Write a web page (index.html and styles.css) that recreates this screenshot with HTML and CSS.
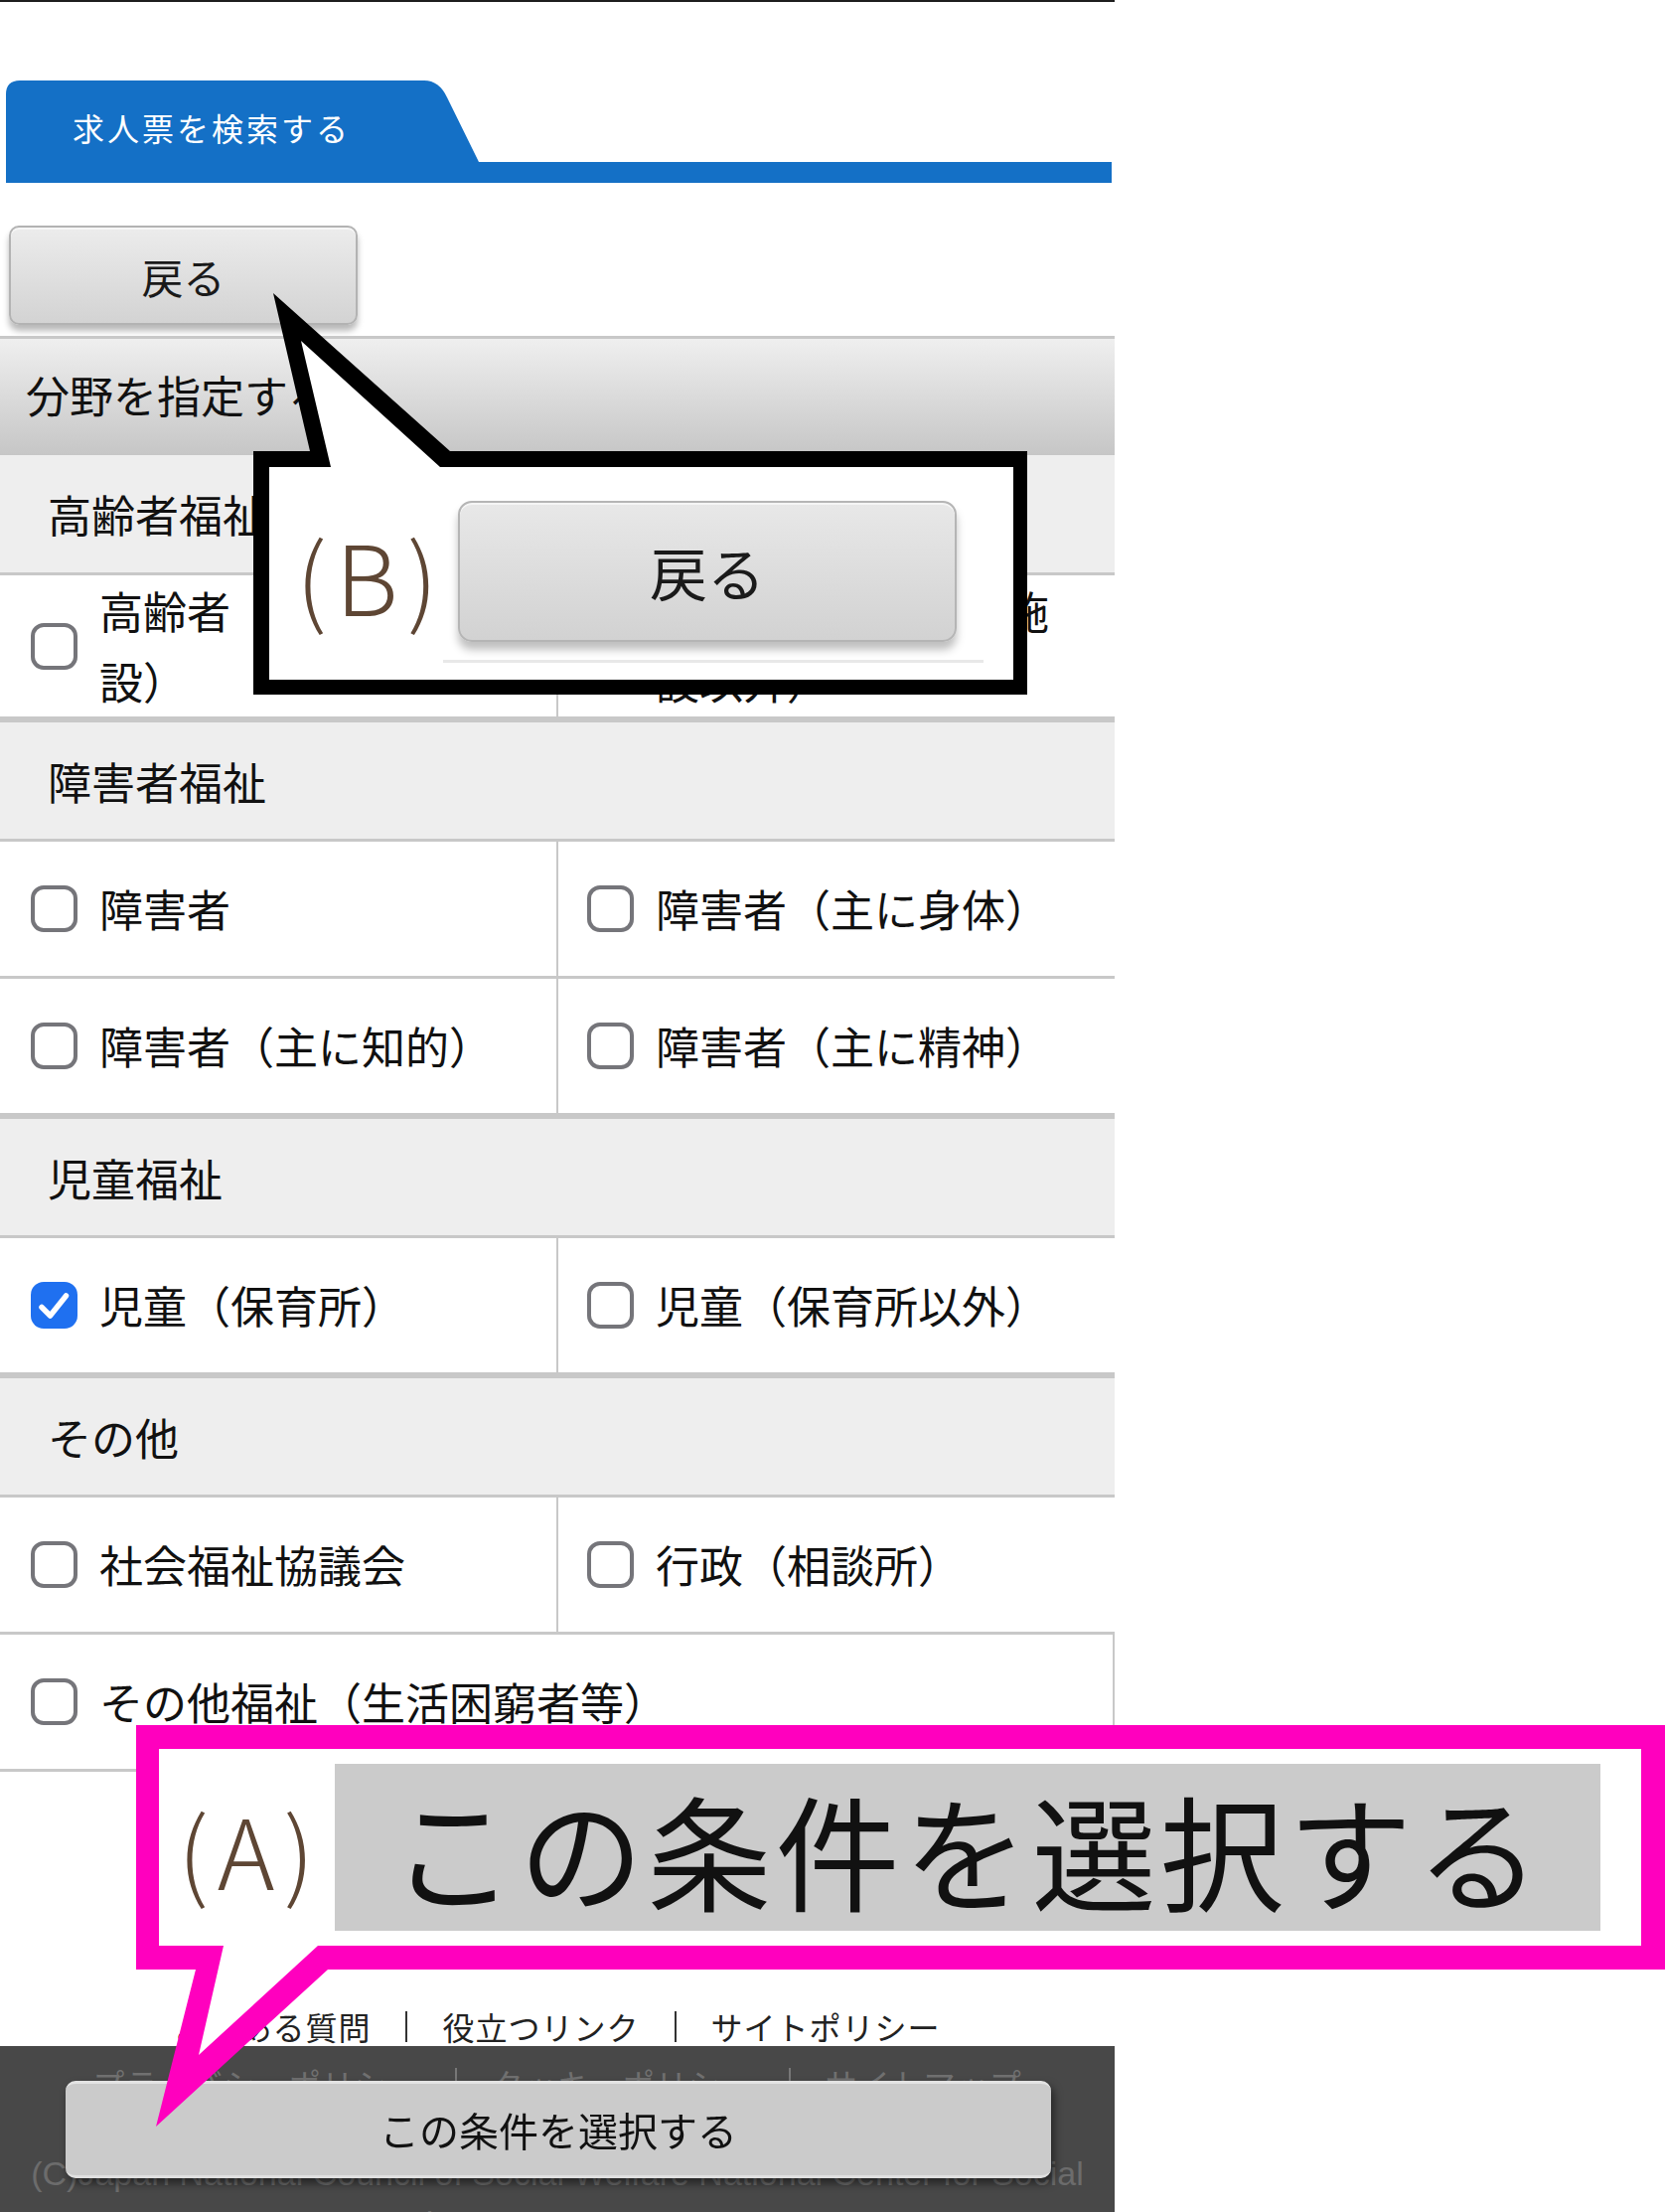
FILE: index.html
```html
<!DOCTYPE html>
<html lang="ja">
<head>
    <meta charset="UTF-8">
    <meta name="viewport" content="width=device-width, initial-scale=1.0">
    <title>求人票を検索する - 分野を指定する</title>
    <link rel="stylesheet" href="styles.css">
</head>
<body>
    <div class="page">
        <div class="tab-head"><div class="tab">求人票を検索する</div></div>

        <button class="back">戻る</button>

        <div class="field-title">分野を指定する</div>

        <section class="cat">
            <h3 class="cat-head first">高齢者福祉</h3>
            <div class="opts">
                <label class="opt"><span class="box"></span><span>高齢者（介護保険施設）</span></label>
                <label class="opt"><span class="box"></span><span>高齢者（介護保険施設以外）</span></label>
            </div>
        </section>

        <section class="cat">
            <h3 class="cat-head">障害者福祉</h3>
            <div class="opts">
                <label class="opt"><span class="box"></span><span>障害者</span></label>
                <label class="opt"><span class="box"></span><span>障害者（主に身体）</span></label>
                <label class="opt"><span class="box"></span><span>障害者（主に知的）</span></label>
                <label class="opt"><span class="box"></span><span>障害者（主に精神）</span></label>
            </div>
        </section>

        <section class="cat">
            <h3 class="cat-head">児童福祉</h3>
            <div class="opts">
                <label class="opt">
                    <span class="box on"><svg viewBox="0 0 47 47" width="47" height="47"><path d="M11 25.5 L19.5 34 L35.5 14" fill="none" stroke="#fff" stroke-width="5.5" stroke-linecap="round" stroke-linejoin="round"/></svg></span>
                    <span>児童（保育所）</span>
                </label>
                <label class="opt"><span class="box"></span><span>児童（保育所以外）</span></label>
            </div>
        </section>

        <section class="cat">
            <h3 class="cat-head">その他</h3>
            <div class="opts">
                <label class="opt"><span class="box"></span><span>社会福祉協議会</span></label>
                <label class="opt"><span class="box"></span><span>行政（相談所）</span></label>
                <label class="opt wide"><span class="box"></span><span>その他福祉（生活困窮者等）</span></label>
            </div>
        </section>

        <nav class="links">
            <a href="#">よくある質問</a><span class="sep"></span>
            <a href="#">役立つリンク</a><span class="sep"></span>
            <a href="#">サイトポリシー</a>
        </nav>

        <footer class="foot">
            <nav class="links dark">
                <a href="#">プライバシーポリシー</a><span class="sep"></span>
                <a href="#">クッキーポリシー</a><span class="sep"></span>
                <a href="#">サイトマップ</a>
            </nav>
            <p class="copy">(C)Japan National Council of Social Welfare National Center for Social Service Human Resources</p>
        </footer>
    </div>

    <div class="sticky">この条件を選択する</div>

    <!-- annotation callouts drawn over the page -->
    <div class="notes">
        <svg width="1676" height="2226" viewBox="0 0 1676 2226">
            <polygon points="255,454 312,454 275,295 453,454 1034,454 1034,699 255,699" fill="#000"/>
            <polygon points="271,470 333,470 303,343 443,470 1020,470 1020,684 271,684" fill="#fff"/>
            <polygon points="137,1736 1676,1736 1676,1982 330,1982 157,2140 197,1982 137,1982" fill="#ff00be"/>
            <polygon points="160,1760 1652,1760 1652,1958 320,1958 200,2068 225,1958 160,1958" fill="#fff"/>
        </svg>
        <div class="note note-b">
            <span class="tag">(B)</span>
            <div class="shot">
                <div class="shot-btn">戻る</div>
                <div class="shot-line"></div>
            </div>
        </div>
        <div class="note note-a">
            <span class="tag">(A)</span>
            <div class="big">この条件を選択する</div>
        </div>
    </div>
</body>
</html>
```

FILE: styles.css
```css
html, body {
    margin: 0;
    height: 2226px;
    overflow: hidden;
    background: #fff;
}

body {
    font-family: "Noto Sans CJK JP", "Noto Sans", sans-serif;
    color: #111;
    position: relative;
}

.page {
    width: 1122px;
    height: 2224px;
    border-top: 2px solid #1e1e1e;
}

/* blue tab header */
.tab-head {
    margin: 79px 3px 0 6px;
    border-bottom: 21px solid #1470c6;
}

.tab {
    width: 476px;
    height: 82px;
    box-sizing: border-box;
    padding: 11px 0 0 67px;
    background: #1470c6;
    clip-path: path('M0 82 V14 Q0 0 14 0 H421 Q436 0 444 17 L476 82 Z');
    color: #fff;
    font-size: 32px;
    letter-spacing: 3px;
    display: flex;
    align-items: center;
}

.back {
    display: block;
    width: 351px;
    height: 100px;
    margin: 43px 0 11px 9px;
    padding: 0;
    border: 2px solid #b3b3b3;
    border-radius: 10px;
    background: linear-gradient(#ececec, #d3d3d3);
    box-shadow: inset 0 2px 0 #f7f7f7, 0 6px 6px rgba(0, 0, 0, 0.28);
    font-family: inherit;
    font-size: 42px;
    color: #1a1a1a;
}

.field-title {
    border-top: 3px solid #c8c8c8;
    height: 117px;
    padding: 0 0 6px 26px;
    box-sizing: content-box;
    height: 111px;
    background: linear-gradient(#efefef, #c6c6c6);
    display: flex;
    align-items: center;
    font-size: 44px;
}

.cat-head {
    margin: 0;
    height: 117px;
    padding-left: 48px;
    background: #eee;
    border-top: 3px solid #c8c8c8;
    border-bottom: 3px solid #c8c8c8;
    display: flex;
    align-items: center;
    font-size: 44px;
    font-weight: normal;
}

.cat-head.first {
    border-top: 0;
    height: 118px;
}

.opts {
    display: grid;
    grid-template-columns: 560px 1fr;
}

.opt {
    display: flex;
    align-items: center;
    min-height: 135px;
    padding: 0 30px 0 31px;
    border-bottom: 3px solid #c8c8c8;
    font-size: 44px;
    line-height: 71px;
}

.opt:nth-child(2n) {
    border-left: 2px solid #c8c8c8;
    padding-left: 29px;
}

.opt.wide {
    grid-column: 1 / -1;
    border-right: 2px solid #c8c8c8;
}

.box {
    flex: none;
    width: 47px;
    height: 47px;
    box-sizing: border-box;
    margin-right: 22px;
    border: 4px solid #75757a;
    border-radius: 13px;
}

.box.on {
    border: 0;
    background: #1f70f0;
}

.box svg {
    display: block;
}

/* footer */
.links {
    height: 40px;
    margin-top: 236px;
    display: flex;
    justify-content: center;
    align-items: center;
    font-size: 32px;
    letter-spacing: 1px;
}

.links a {
    color: #222;
    text-decoration: none;
}

.sep {
    width: 2px;
    height: 31px;
    margin: 0 35px;
    background: #333;
}

.foot {
    box-sizing: border-box;
    height: 169px;
    padding-top: 17px;
    background: #484848;
    border-bottom: 2px solid #111;
    overflow: hidden;
}

.links.dark {
    margin-top: 0;
}

.links.dark a {
    color: #707070;
}

.links.dark .sep {
    background: #777;
}

.copy {
    margin: 46px 20px 0;
    font-family: "Liberation Sans", Arial, sans-serif;
    font-size: 34px;
    line-height: 50px;
    text-align: center;
    color: #6c6c6c;
}

.sticky {
    position: fixed;
    left: 66px;
    bottom: 34px;
    width: 992px;
    height: 98px;
    box-sizing: border-box;
    background: #cbcbcb;
    border-top: 3px solid #e4e4e4;
    border-bottom: 3px solid #e0e0e0;
    border-radius: 10px;
    box-shadow: 3px 5px 8px rgba(0, 0, 0, 0.5);
    display: flex;
    align-items: center;
    justify-content: center;
    font-size: 40px;
    color: #111;
}

/* callouts */
.notes {
    position: absolute;
    left: 0;
    top: 0;
    width: 1676px;
    height: 2226px;
    pointer-events: none;
    z-index: 5;
}

.notes svg {
    position: absolute;
    left: 0;
    top: 0;
}

.note {
    position: absolute;
    box-sizing: border-box;
    display: flex;
    align-items: center;
}

.note-b {
    left: 271px;
    top: 470px;
    width: 749px;
    height: 214px;
    padding-left: 27px;
}

.note-a {
    left: 160px;
    top: 1760px;
    width: 1492px;
    height: 198px;
    padding-left: 19px;
}

.tag {
    color: #5e4634;
    font-size: 98px;
    font-weight: 300;
    letter-spacing: 9px;
    line-height: 1;
}

.note-b .tag {
    width: 148px;
}

.note-a .tag {
    width: 158px;
}

.shot {
    align-self: flex-start;
    padding-top: 34px;
    width: 544px;
}

.shot-btn {
    width: 502px;
    height: 142px;
    margin-left: 15px;
    box-sizing: border-box;
    border: 2px solid #b5b5b5;
    border-radius: 14px;
    background: linear-gradient(#e8e8e8, #d2d2d2);
    box-shadow: inset 0 2px 0 #f5f5f5, 0 8px 8px rgba(0, 0, 0, 0.25);
    display: flex;
    align-items: center;
    justify-content: center;
    font-size: 58px;
    color: #1a1a1a;
}

.shot-line {
    margin-top: 18px;
    height: 3px;
    background: #e8e8e8;
}

.big {
    width: 1274px;
    height: 168px;
    background: #cbcbcb;
    display: flex;
    align-items: center;
    justify-content: center;
    font-size: 125px;
    letter-spacing: 4px;
    color: #111;
}
```
